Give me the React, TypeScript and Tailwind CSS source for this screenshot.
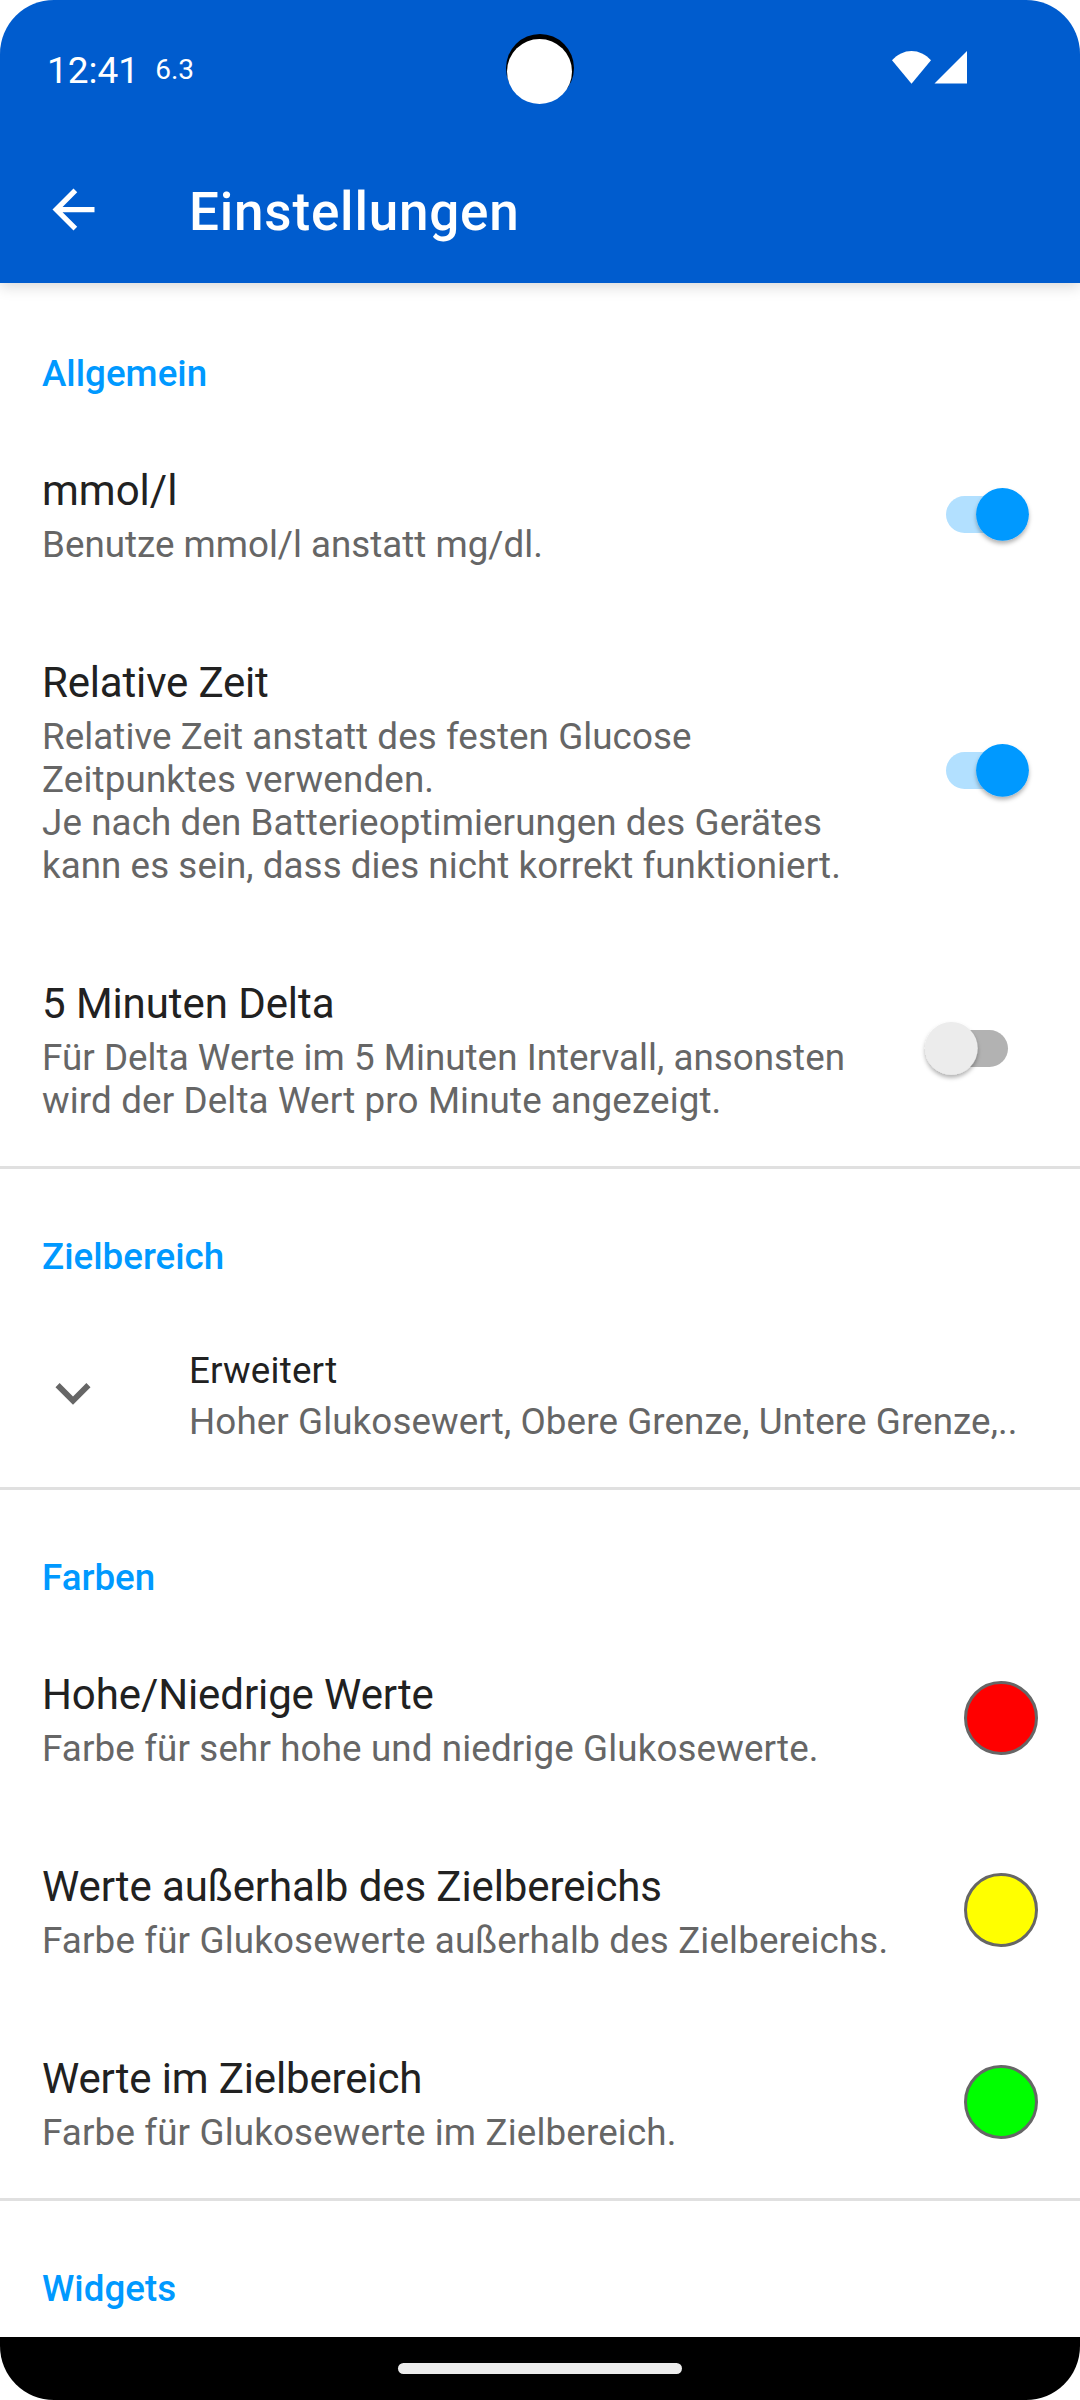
import React from 'react';

function Header({ children }: { children: string }) {
  return (
    <h2 className="h-[135px] pt-[69px] pl-[42px] text-[36.75px] leading-[43px] font-medium text-[#0099ff]">{children}</h2>
  );
}

function Toggle({ on }: { on: boolean }) {
  return (
    <svg className="mr-[40px] mb-px block h-[72px] w-[126px]" viewBox="0 0 126 72">
      <defs>
        <filter id="thumb" x="-30%" y="-30%" width="160%" height="160%">
          <feDropShadow dx="0" dy="3" stdDeviation="2.2" floodColor="#000" floodOpacity="0.3" />
        </filter>
      </defs>
      <rect x={on ? 32 : 16} y="18" width="78" height="37" rx="18.5" fill={on ? '#b2e0ff' : '#b2b2b2'} />
      <circle cx={on ? 88.5 : 37.3} cy="36.3" r="26.4" fill={on ? '#0099ff' : '#ececec'} filter="url(#thumb)" />
    </svg>
  );
}

function Dot({ color }: { color: string }) {
  return (
    <svg className="mr-[42px] block h-[74px] w-[74px]" viewBox="0 0 74 74">
      <circle cx="37" cy="37" r="35.5" fill={color} stroke="#666" strokeWidth="3" />
    </svg>
  );
}

type Line = { text: string; className: string };

function Row({ title, titleClass = 'tracking-[-0.1px]', lines, children }: {
  title: string;
  titleClass?: string;
  lines: Line[];
  children: React.ReactNode;
}) {
  return (
    <div className="flex items-center pl-[42px]">
      <div className="flex-1 pt-[48px] pb-[44px]">
        <div className={`text-[42px] leading-[50px] text-[#212121] ${titleClass}`}>{title}</div>
        <div className="mt-[7px] text-[36.75px] leading-[43px] whitespace-nowrap text-[#666]">
          {lines.map((l) => (
            <div key={l.text} className={l.className}>{l.text}</div>
          ))}
        </div>
      </div>
      {children}
    </div>
  );
}

function Section({ children, divided = true }: { children: React.ReactNode; divided?: boolean }) {
  return <section className={divided ? 'shadow-[inset_0_3px_0_#e0e0e0]' : ''}>{children}</section>;
}

export default function App() {
  return (
    <div className="relative flex h-[2400px] w-[1080px] flex-col overflow-hidden rounded-[54px] bg-white font-['Roboto',sans-serif]">
      <header className="relative flex h-[283px] shrink-0 flex-col bg-[#005cce] text-white shadow-[0_3px_14px_rgba(0,0,0,0.17)]">
        <div className="flex h-[139px] items-baseline pt-[49px] pl-[47px]">
          <span className="text-[37px] leading-[44px]">12:41</span>
          <span className="ml-[16px] -translate-y-[4px] text-[28px] leading-[34px]">6.3</span>
          <svg className="absolute top-[34px] left-[506px] h-[70px] w-[68px]" viewBox="0 0 68 70">
            <circle cx="34" cy="34" r="34" fill="#000" />
            <circle cx="33.5" cy="37.5" r="32.5" fill="#fff" />
          </svg>
          <svg className="absolute top-[51px] left-[892px] h-[33px] w-[76px]" viewBox="0 0 76 33" fill="#fff">
            <path d="M0 9.2C5.5 3.400 12.200 0 19.500 0S33.500 3.400 39 9.200L19.500 32.700Z" />
            <path d="M75 0V32.500H42.500Z" />
          </svg>
        </div>
        <div className="flex h-[144px] items-center pl-[42px]">
          <svg className="mb-[3px] h-[63px] w-[63px]" viewBox="0 0 24 24" fill="#fff">
            <path d="M20 11H7.830l5.590-5.590L12 4l-8 8 8 8 1.410-1.410L7.830 13H20v-2z" />
          </svg>
          <h1 className="mt-[2px] ml-[84px] text-[53px] leading-[62px] font-medium tracking-[0.8px]">Einstellungen</h1>
        </div>
      </header>

      <main className="h-[2054px] shrink-0 overflow-hidden">
        <Section divided={false}>
          <Header>Allgemein</Header>
          <Row title="mmol/l" titleClass="tracking-normal" lines={[{ text: 'Benutze mmol/l anstatt mg/dl.', className: 'tracking-normal' }]}>
            <Toggle on />
          </Row>
          <Row
            title="Relative Zeit"
            titleClass="tracking-[-0.17px]"
            lines={[
              { text: 'Relative Zeit anstatt des festen Glucose', className: 'tracking-[0.07px]' },
              { text: 'Zeitpunktes verwenden.', className: 'tracking-[0.15px]' },
              { text: 'Je nach den Batterieoptimierungen des Gerätes', className: 'tracking-[0.1px]' },
              { text: 'kann es sein, dass dies nicht korrekt funktioniert.', className: 'tracking-[0.06px]' },
            ]}
          >
            <Toggle on />
          </Row>
          <Row
            title="5 Minuten Delta"
            titleClass="tracking-[-0.07px]"
            lines={[
              { text: 'Für Delta Werte im 5 Minuten Intervall, ansonsten', className: 'tracking-[0.04px]' },
              { text: 'wird der Delta Wert pro Minute angezeigt.', className: 'tracking-[0.13px]' },
            ]}
          >
            <Toggle on={false} />
          </Row>
        </Section>

        <Section>
          <Header>Zielbereich</Header>
          <div className="flex h-[186px] items-center pl-[38px] text-[36.75px] leading-[43px]">
            <svg className="mb-[2px] h-[70px] w-[70px]" viewBox="0 0 24 24" fill="#666">
              <path d="M16.590 8.590L12 13.170 7.410 8.590 6 10l6 6 6-6z" />
            </svg>
            <div className="mt-[3px] ml-[81px] whitespace-nowrap">
              <div className="tracking-[0.2px] text-[#212121]">Erweitert</div>
              <div className="mt-[8px] tracking-[0.1px] text-[#666]">Hoher Glukosewert, Obere Grenze, Untere Grenze,..</div>
            </div>
          </div>
        </Section>

        <Section>
          <Header>Farben</Header>
          <Row title="Hohe/Niedrige Werte" lines={[{ text: 'Farbe für sehr hohe und niedrige Glukosewerte.', className: 'tracking-[0.13px]' }]}>
            <Dot color="#ff0000" />
          </Row>
          <Row title="Werte außerhalb des Zielbereichs" lines={[{ text: 'Farbe für Glukosewerte außerhalb des Zielbereichs.', className: 'tracking-[0.15px]' }]}>
            <Dot color="#ffff00" />
          </Row>
          <Row title="Werte im Zielbereich" titleClass="tracking-[-0.15px]" lines={[{ text: 'Farbe für Glukosewerte im Zielbereich.', className: 'tracking-[0.15px]' }]}>
            <Dot color="#00ff00" />
          </Row>
        </Section>

        <Section>
          <Header>Widgets</Header>
        </Section>
      </main>

      <div className="flex h-[63px] shrink-0 justify-center bg-black pt-[26px]">
        <div className="h-[11px] w-[284px] rounded-full bg-[#ececec]" />
      </div>
    </div>
  );
}
